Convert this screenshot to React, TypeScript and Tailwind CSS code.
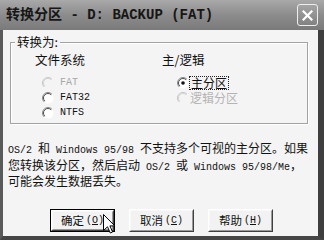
import React from 'react';

const cjk = "font-['Noto_Sans_CJK_SC',sans-serif]";

function M({ children, className = '' }: { children: React.ReactNode; className?: string }) {
  return <span className={`font-['Liberation_Mono',monospace] text-[10px] ${className}`}>{children}</span>;
}

function Radio({ checked = false, disabled = false }: { checked?: boolean; disabled?: boolean }) {
  return (
    <svg width="12" height="12" viewBox="0 0 12 12" className="shrink-0">
      <circle cx="6" cy="6" r="5.5" fill={disabled ? '#f4f4f4' : '#ffffff'} />
      <path d="M9.9 2.1 A5.5 5.5 0 0 0 2.1 9.9" fill="none" stroke={disabled ? '#c4c4c4' : '#8a8a8a'} />
      <path d="M9.2 2.8 A4.5 4.5 0 0 0 2.8 9.2" fill="none" stroke={disabled ? '#d4d4d4' : '#4a4a4a'} />
      {checked && <circle cx="6" cy="6" r="1.8" fill="#111" />}
    </svg>
  );
}

function Btn({ label, hot, def = false }: { label: string; hot: string; def?: boolean }) {
  return (
    <div className={`w-[65px] h-[23px] ${def ? 'border border-black' : ''}`}>
      <div className="h-full border border-t-white border-l-white border-r-[#404040] border-b-[#404040]">
        <div className="h-full flex items-center justify-center gap-[2px] bg-[#f2f2f2] border border-t-[#f8f8f8] border-l-[#f8f8f8] border-r-[#9a9a9a] border-b-[#9a9a9a]">
          <span className={`${cjk} text-[11.5px] leading-none text-[#111]`}>{label}</span>
          <M className="text-[9.5px] leading-none text-[#111]">
            (<span className="underline">{hot}</span>)
          </M>
        </div>
      </div>
    </div>
  );
}

export default function App() {
  return (
    <div className="relative w-[324px] h-[240px] flex flex-col overflow-hidden bg-[#f4f4f4]">
      {/* Title bar */}
      <div className="h-[30px] shrink-0 flex items-center justify-between pl-[6px] pr-[6px] bg-gradient-to-b from-[#a9a9a9] via-[#8c8c8c] to-[#7a7a7a]">
        <div className="font-['Liberation_Mono','Noto_Sans_CJK_SC',monospace] text-[14px] font-bold text-[#161616] whitespace-nowrap leading-none">
          转换分区 - D: BACKUP (FAT)
        </div>
        <div className="w-[21px] h-[22px] rounded-[3px] border border-[#eeeeee] bg-gradient-to-b from-[#a4a4a4] to-[#828282] flex items-center justify-center">
          <svg width="11" height="11" viewBox="0 0 11 11">
            <path d="M1.5 1.5 L9.5 9.5 M9.5 1.5 L1.5 9.5" stroke="#ffffff" strokeWidth="2.2" strokeLinecap="square" />
          </svg>
        </div>
      </div>

      {/* Body */}
      <div className="flex-1 flex flex-col border-l-[3px] border-l-[#5a5a5a] border-r-[6px] border-r-[#3e3e3e] border-b-[4px] border-b-[#454545] bg-[#f4f4f4]">
        <fieldset className="ml-[7px] mt-[5px] w-[298px] border border-[#a2a2a2] shadow-[inset_1px_1px_0_#ffffff,1px_1px_0_#ffffff] pt-[4px] pb-[3px]">
          <legend className={`${cjk} ml-[4px] px-[2px] text-[12.5px] leading-[14px] text-[#111] bg-[#f4f4f4]`}>转换为:</legend>
          <div className="grid grid-cols-[127px_1fr] pl-[24px]">
            <div>
              <div className={`${cjk} text-[12.5px] leading-[14px] text-[#111]`}>文件系统</div>
              <div className="mt-[8px] flex flex-col">
                <div className="h-[15px] flex items-center pl-[7px] gap-[6px]">
                  <Radio disabled />
                  <M className="text-[#a8a8a8]">FAT</M>
                </div>
                <div className="h-[15px] flex items-center pl-[7px] gap-[6px]">
                  <Radio />
                  <M className="text-[#111]">FAT32</M>
                </div>
                <div className="h-[15px] flex items-center pl-[7px] gap-[6px]">
                  <Radio />
                  <M className="text-[#111]">NTFS</M>
                </div>
              </div>
            </div>
            <div>
              <div className={`${cjk} text-[12.5px] leading-[14px] text-[#111]`}>主/逻辑</div>
              <div className="mt-[8px] flex flex-col">
                <div className="h-[15px] flex items-center pl-[15px]">
                  <Radio checked />
                  <span className={`${cjk} text-[12px] leading-[12px] text-[#111] border border-dotted border-[#222] px-[1px]`}>主分区</span>
                </div>
                <div className="h-[15px] flex items-center pl-[15px] gap-[1px]">
                  <Radio disabled />
                  <span className={`${cjk} text-[12px] leading-[12px] text-[#b4b4b4]`}>逻辑分区</span>
                </div>
              </div>
            </div>
          </div>
        </fieldset>

        <div className={`${cjk} mt-[17px] ml-[5px] text-[12px] leading-[13.5px] text-[#111] whitespace-nowrap`}>
          <M>OS/2 </M>和<M> Windows 95/98 </M>不支持多个可视的主分区。如果
          <br />
          您转换该分区，然后启动<M> OS/2 </M>或<M> Windows 95/98/Me</M>，
          <br />
          可能会发生数据丢失。
        </div>

        <div className="mt-auto mb-[4px] flex pl-[47px] gap-[14px]">
          <Btn label="确定" hot="O" def />
          <Btn label="取消" hot="C" />
          <Btn label="帮助" hot="H" />
        </div>
      </div>

      {/* Mouse pointer */}
      <svg width="13" height="21" viewBox="0 0 13 21" className="absolute left-[103px] top-[214px]">
        <path d="M0.5 0.5 L0.5 16.5 L4.5 12.8 L7.3 19 L9.6 18 L6.9 11.9 L11.8 11.9 Z" fill="#ffffff" stroke="#000000" strokeWidth="1" strokeLinejoin="miter" />
      </svg>
    </div>
  );
}
